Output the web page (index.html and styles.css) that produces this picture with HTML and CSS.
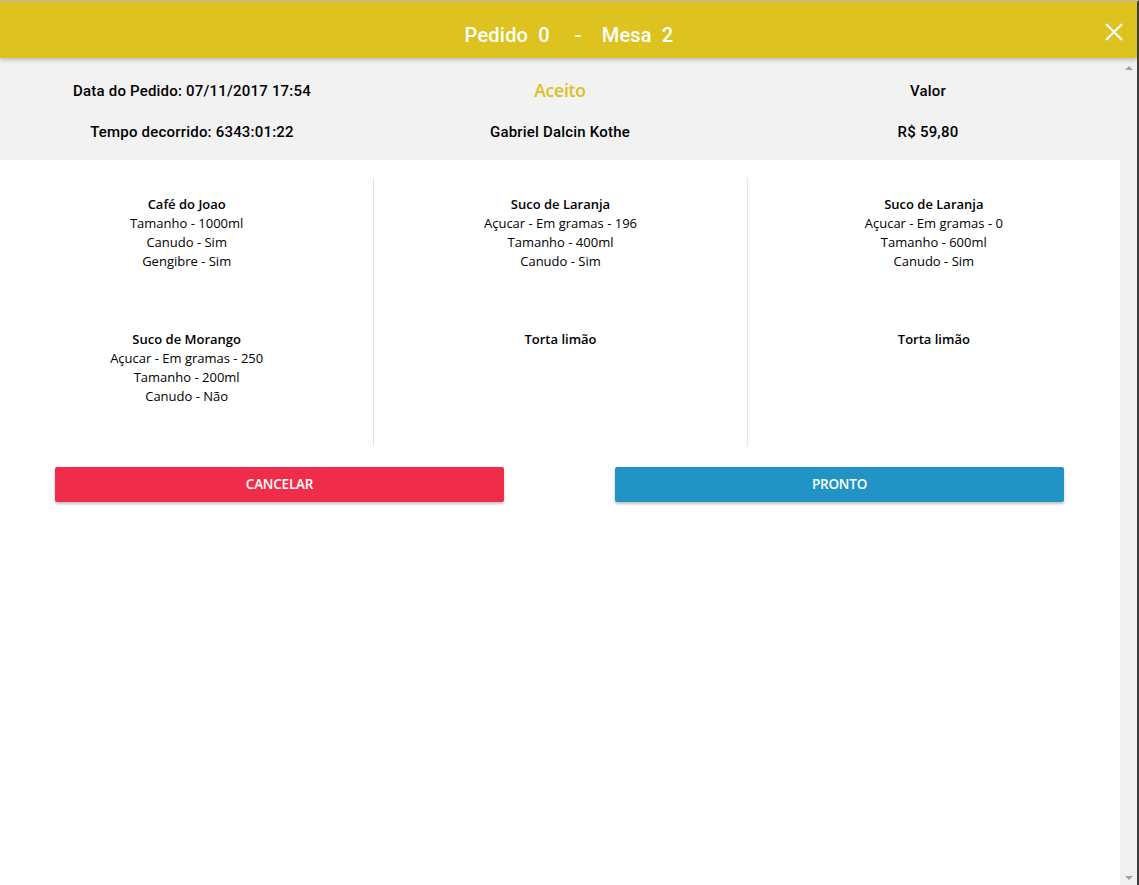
FILE: index.html
```html
<!DOCTYPE html>
<html lang="pt-BR">
<head>
<meta charset="utf-8">
<title>Pedido 0 - Mesa 2</title>
<link rel="stylesheet" href="styles.css">
</head>
<body>
<div class="window">
  <header class="topbar">
    <h1 class="title"><span>Pedido</span><span class="num">0</span><span class="dash">-</span><span>Mesa</span><span class="num">2</span></h1>
    <button class="close" aria-label="Fechar">
      <svg width="20" height="20" viewBox="0 0 20 20"><path d="M2 2 L18 18 M18 2 L2 18" stroke="#fff" stroke-width="2.2" fill="none"/></svg>
    </button>
  </header>
  <div class="body">
    <main class="content">
      <section class="info">
        <div class="info-cell">Data do Pedido: 07/11/2017 17:54</div>
        <div class="info-cell status">Aceito</div>
        <div class="info-cell">Valor</div>
        <div class="info-cell">Tempo decorrido: 6343:01:22</div>
        <div class="info-cell">Gabriel Dalcin Kothe</div>
        <div class="info-cell">R$ 59,80</div>
      </section>
      <section class="items">
        <div class="col">
          <div class="item">
            <div class="item-name">Café do Joao</div>
            <div>Tamanho - 1000ml</div>
            <div>Canudo - Sim</div>
            <div>Gengibre - Sim</div>
          </div>
          <div class="item">
            <div class="item-name">Suco de Morango</div>
            <div>Açucar - Em gramas - 250</div>
            <div>Tamanho - 200ml</div>
            <div>Canudo - Não</div>
          </div>
        </div>
        <div class="col">
          <div class="item">
            <div class="item-name">Suco de Laranja</div>
            <div>Açucar - Em gramas - 196</div>
            <div>Tamanho - 400ml</div>
            <div>Canudo - Sim</div>
          </div>
          <div class="item">
            <div class="item-name">Torta limão</div>
          </div>
        </div>
        <div class="col">
          <div class="item">
            <div class="item-name">Suco de Laranja</div>
            <div>Açucar - Em gramas - 0</div>
            <div>Tamanho - 600ml</div>
            <div>Canudo - Sim</div>
          </div>
          <div class="item">
            <div class="item-name">Torta limão</div>
          </div>
        </div>
      </section>
      <section class="actions">
        <div class="action"><button class="btn btn-cancel">Cancelar</button></div>
        <div class="action"><button class="btn btn-ready">Pronto</button></div>
      </section>
    </main>
    <div class="scrollbar">
      <span class="arrow up"></span>
      <span class="arrow down"></span>
    </div>
  </div>
</div>
</body>
</html>
```
FILE: styles.css
```css
* { box-sizing: border-box; }
html, body { margin: 0; padding: 0; }
body {
  background: #fff;
  font-family: "Open Sans", "Noto Sans", sans-serif;
  color: #000;
}
.window {
  width: 1139px;
  height: 885px;
  border-top: 2px solid #c8bb84;
  border-right: 2px solid #3c3c3c;
  display: flex;
  flex-direction: column;
  overflow: hidden;
}
.topbar {
  position: relative;
  z-index: 2;
  height: 56px;
  flex: none;
  background: #dec220;
  display: flex;
  align-items: center;
  justify-content: center;
  padding-top: 10px;
  box-shadow: 0 2px 4px rgba(0,0,0,0.22);
}
.title {
  margin: 0;
  padding-left: 1px;
  font-family: Roboto, "Liberation Sans", sans-serif;
  font-weight: 500;
  font-size: 20px;
  letter-spacing: 0.2px;
  color: #fff;
  display: flex;
}
.title .num { margin-left: 10px; }
.title .dash { margin: 0 20px 0 25px; }
.close {
  position: absolute;
  right: 12px;
  top: 19px;
  width: 22px;
  height: 22px;
  padding: 1px;
  border: 0;
  background: none;
  display: flex;
}
.body {
  flex: 1;
  display: flex;
  min-height: 0;
}
.content {
  width: 1120px;
  flex: none;
}
.scrollbar {
  flex: 1;
  background: #f0f0f0;
  display: flex;
  flex-direction: column;
  justify-content: space-between;
  align-items: center;
  padding: 8px 0 5px;
}
.arrow {
  width: 0;
  height: 0;
  border-left: 4px solid transparent;
  border-right: 4px solid transparent;
}
.arrow.up { border-bottom: 4px solid #a3a3a3; }
.arrow.down { border-top: 4px solid #a3a3a3; }

.info {
  background: #f2f2f2;
  display: grid;
  grid-template-columns: repeat(3, 1fr);
  grid-auto-rows: 41px;
  padding: 12px 8px 8px;
  font-family: Roboto, "Liberation Sans", sans-serif;
  font-weight: 500;
  font-size: 15px;
  letter-spacing: 0.2px;
}
.info-cell {
  display: flex;
  align-items: center;
  justify-content: center;
}
.info-cell.status {
  font-family: "Open Sans", "Noto Sans", sans-serif;
  font-weight: 600;
  font-size: 17.5px;
  color: #dcc023;
  letter-spacing: -0.2px;
  padding-bottom: 2px;
}
.items {
  display: grid;
  grid-template-columns: repeat(3, 1fr);
  padding-top: 18px;
  height: 286px;
}
.col {
  text-align: center;
  font-size: 13px;
  line-height: 19px;
  padding-top: 17px;
}
.col + .col { border-left: 1px solid #e6e6e6; }
.item:first-child { height: 135px; }
.item-name { font-weight: 600; }

.actions {
  display: grid;
  grid-template-columns: 1fr 1fr;
  padding-top: 21px;
}
.action { padding: 0 56px 0 55px; }
.btn {
  width: 100%;
  height: 35px;
  border: 0;
  border-radius: 2px;
  color: #fff;
  font-family: "Open Sans", "Noto Sans", sans-serif;
  font-size: 13.5px;
  font-weight: 600;
  letter-spacing: -0.2px;
  text-transform: uppercase;
  padding-bottom: 3px;
  box-shadow: 0 2px 3px rgba(0,0,0,0.25);
}
.btn-cancel { background: #ef2d4a; }
.btn-ready { background: #2193c4; }
```
